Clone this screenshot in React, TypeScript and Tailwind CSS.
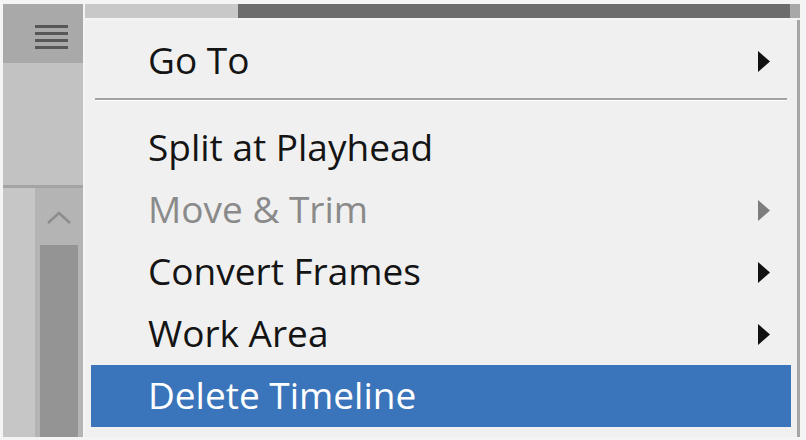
// Timeline panel menu (Go To / Split / Move & Trim ...)

type MenuItem = {
  label: string;
  submenu?: boolean;
  disabled?: boolean;
  active?: boolean;
};

const ITEMS: MenuItem[] = [
  { label: 'Split at Playhead' },
  { label: 'Move & Trim', submenu: true, disabled: true },
  { label: 'Convert Frames', submenu: true },
  { label: 'Work Area', submenu: true },
  { label: 'Delete Timeline', active: true },
];

function Caret({ muted }: { muted?: boolean }) {
  return (
    <svg width="14" height="23" viewBox="0 0 14 23" aria-hidden="true">
      <path d="M1 1 L13 11.5 L1 22 Z" fill={muted ? '#7d7d7d' : '#111111'} />
    </svg>
  );
}

function Row({ item }: { item: MenuItem }) {
  const text = item.active ? 'text-white' : item.disabled ? 'text-[#8a8a8a]' : 'text-[#141414]';
  return (
    <div
      className={`flex h-[62px] items-center pl-[57px] pr-[20px] ${item.active ? 'bg-[#3a74ba]' : ''}`}
    >
      <span className={`flex-1 pb-[4px] text-[37px] font-medium leading-none ${text}`}>{item.label}</span>
      {item.submenu ? <Caret muted={item.disabled} /> : null}
    </div>
  );
}

export default function App() {
  return (
    <div
      className="flex h-[440px] w-[806px] overflow-hidden bg-[#f4f4f4] pb-[3px] pl-[3px] pt-[4px]"
      style={{ fontFamily: '"Open Sans", "Noto Sans", sans-serif' }}
    >
      {/* left tool column */}
      <aside className="flex w-[80px] flex-col">
        <div className="flex h-[59px] flex-col items-center gap-[4px] bg-[#a9a9a9] pl-[17px] pt-[21px]">
          <span className="h-[3px] w-[33px] bg-[#575757]" />
          <span className="h-[3px] w-[33px] bg-[#575757]" />
          <span className="h-[3px] w-[33px] bg-[#575757]" />
          <span className="h-[3px] w-[33px] bg-[#575757]" />
        </div>
        <div className="h-[122px] bg-[#c2c2c2]" />
        <div className="h-[3px] bg-[#a4a4a4]" />
        <div className="flex flex-1">
          <div className="w-[32px] bg-[#c6c6c6]" />
          <div className="flex flex-1 flex-col items-center bg-[#b4b4b4]">
            <svg className="mt-[22px]" width="26" height="16" viewBox="0 0 26 16" aria-hidden="true">
              <path d="M2 13 L13 3 L24 13" fill="none" stroke="#8c8c8c" strokeWidth="2.5" />
            </svg>
            <div className="mt-[19px] w-[38px] flex-1 bg-[#949494]" />
          </div>
        </div>
      </aside>

      {/* timeline area + popup menu */}
      <main className="ml-[2px] flex w-[715px] flex-col">
        <div className="flex h-[14px]">
          <div className="w-[153px] bg-[#c8c8c8]" />
          <div className="flex-1 bg-[#6c6c6c]" />
          <div className="w-[10px] bg-[#a8a8a8]" />
        </div>
        <div className="h-[2px]" />
        <div className="flex flex-1 flex-col border-r-[3px] border-[#a6a6a6] bg-[#f0f0f0] px-[6px] pt-[10px]">
          <Row item={{ label: 'Go To', submenu: true }} />
          <div className="mx-[4px] mt-[6px] h-[2px] bg-[#a3a3a3]" />
          <div className="mx-[4px] h-[1px] bg-white" />
          <div className="mt-[16px] flex flex-col">
            {ITEMS.map((item) => (
              <Row key={item.label} item={item} />
            ))}
          </div>
        </div>
      </main>
    </div>
  );
}
